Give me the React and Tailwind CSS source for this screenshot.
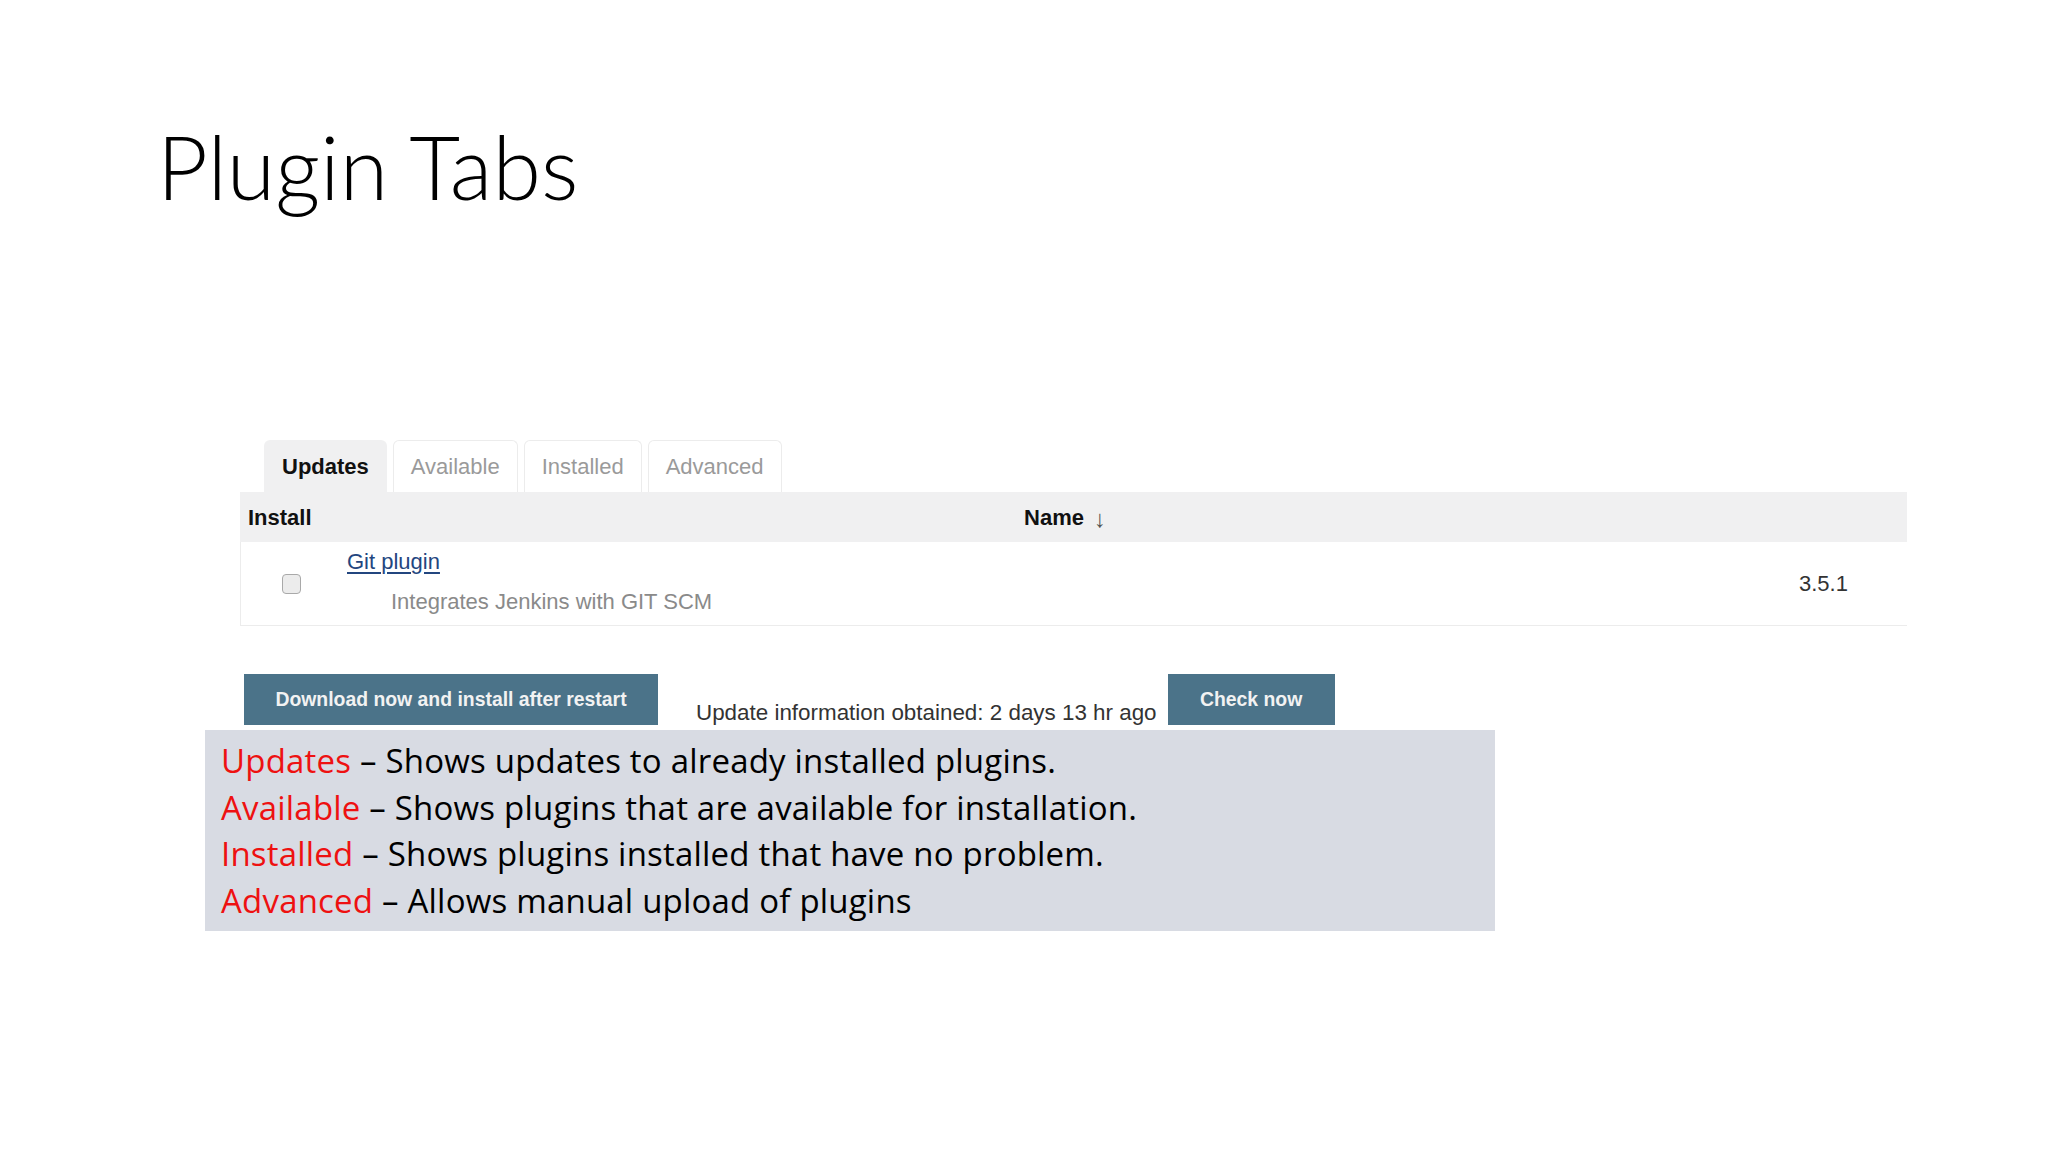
import React from "react";

const tabs = ["Updates", "Available", "Installed", "Advanced"];

const notes = [
  { term: "Updates", text: "Shows updates to already installed plugins." },
  { term: "Available", text: "Shows plugins that are available for installation." },
  { term: "Installed", text: "Shows plugins installed that have no problem." },
  { term: "Advanced", text: "Allows manual upload of plugins" },
];

const PluginTable = () => (
  <div className="w-[1667px] font-['Liberation_Sans',Arial,sans-serif]">
    {/* tab strip */}
    <div className="flex gap-[6px] pl-[24px] h-[52px]">
      {tabs.map((t, i) => (
        <div
          key={t}
          className={
            i === 0
              ? "px-[18px] flex items-center rounded-t-[6px] bg-[#f0f0f1] text-[22px] font-bold text-[#111]"
              : "px-[17px] flex items-center rounded-t-[6px] border border-b-0 border-[#ececec] bg-white text-[22px] text-[#9a9a9a]"
          }
        >
          {t}
        </div>
      ))}
    </div>

    {/* header */}
    <div className="flex items-center h-[50px] bg-[#f0f0f1] text-[22px] font-bold text-[#111]">
      <div className="w-[100px] pl-[8px]">Install</div>
      <div className="flex-1 flex justify-center items-center gap-[10px]">
        <span>Name</span>
        <span className="font-normal text-[24px] text-[#555] leading-none mt-[4px]">↓</span>
      </div>
      <div className="w-[117px]" />
    </div>

    {/* row */}
    <div className="flex items-center h-[84px] border-l border-b border-[#ececec] bg-white">
      <div className="w-[100px] flex justify-center">
        <div className="w-[19px] h-[20px] rounded-[4px] border border-[#a9a9a9] bg-[#ececec]" />
      </div>
      <div className="flex-1 flex flex-col pl-[6px] -mt-[4px]">
        <span className="text-[22px] text-[#23467f] underline underline-offset-[3px] leading-[28px]">
          Git plugin
        </span>
        <span className="pl-[44px] mt-[13px] text-[22px] text-[#8a8a8a] leading-[26px]">
          Integrates Jenkins with GIT SCM
        </span>
      </div>
      <div className="w-[117px] pl-[9px] text-[22px] text-[#333]">3.5.1</div>
    </div>
  </div>
);

export default function App() {
  return (
    <div className="w-[2048px] h-[1152px] bg-white overflow-hidden">
      <h1 className="pt-[116px] pl-[157px] text-[88px] leading-[100px] font-light text-black font-['Lato',Calibri,sans-serif]">
        Plugin Tabs
      </h1>

      <div className="pl-[240px] mt-[224px]">
        <PluginTable />
      </div>

      <div className="flex items-end mt-[48px] pl-[244px] font-['Liberation_Sans',Arial,sans-serif]">
        <button className="w-[414px] h-[51px] bg-[#4b7389] text-[#f2f2f2] text-[19.4px] font-bold">
          Download now and install after restart
        </button>
        <span className="ml-[38px] mr-[11px] mb-[-2px] text-[22.4px] text-[#333] leading-[28px]">
          Update information obtained: 2 days 13 hr ago
        </span>
        <button className="w-[167px] h-[51px] bg-[#4b7389] text-[#f2f2f2] text-[19.4px] font-bold">
          Check now
        </button>
      </div>

      <div className="ml-[205px] mt-[5px] w-[1290px] h-[201px] bg-[#d8dbe3] px-[16px] py-[8px] font-['Open_Sans',Calibri,sans-serif] text-[33px] tracking-[0.2px] leading-[46.5px] text-black">
        {notes.map((n) => (
          <div key={n.term}>
            <span className="text-[#ee1111]">{n.term}</span> – {n.text}
          </div>
        ))}
      </div>
    </div>
  );
}
